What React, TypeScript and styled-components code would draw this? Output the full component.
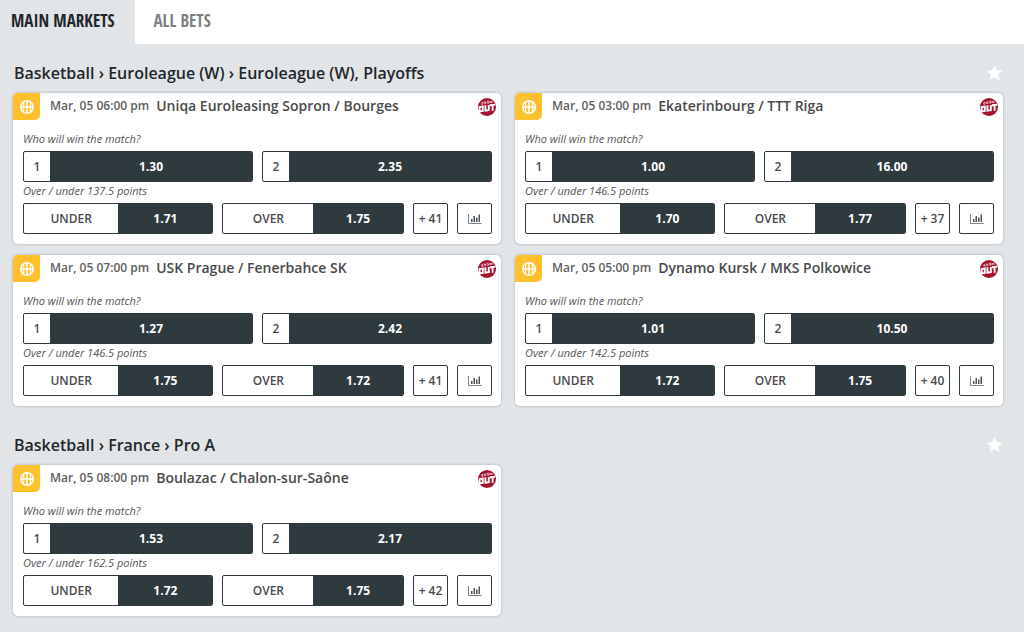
import React from "react";
import styled, { createGlobalStyle } from "styled-components";

const GlobalStyle = createGlobalStyle`
  * { box-sizing: border-box; }
  body {
    margin: 0;
    background: #e1e5e8;
    color: #4a4a4a;
    font-family: "Open Sans", "Noto Sans", sans-serif;
  }
  button { font-family: inherit; cursor: pointer; }
`;

const TabBar = styled.nav`
  display: flex;
  height: 44px;
  background: #fff;
`;

const Tab = styled.button<{ $active?: boolean }>`
  border: 0;
  padding: 0 20px 4px ${(p) => (p.$active ? 11 : 19)}px;
  background: ${(p) => (p.$active ? "#e1e5e8" : "#fff")};
  color: ${(p) => (p.$active ? "#1f272b" : "#7c8183")};
  font-family: "Open Sans Condensed", "Liberation Sans Narrow", sans-serif;
  font-size: 17px;
  font-weight: 700;
  text-transform: uppercase;
`;

const Main = styled.main`
  padding: 17px 21px 0 13px;
`;

const League = styled.section`
  margin-bottom: 27px;
`;

const LeagueHeader = styled.header`
  display: flex;
  align-items: center;
  justify-content: space-between;
  height: 24px;
  margin-bottom: 8px;
`;

const LeagueTitle = styled.h2`
  margin: 0 0 0 1px;
  color: #1f272b;
  font-size: 16px;
  line-height: 24px;
  font-weight: 600;
`;

const StarButton = styled.button`
  display: flex;
  border: 0;
  padding: 0;
  background: none;
`;

const Grid = styled.div`
  display: grid;
  grid-template-columns: 1fr 1fr;
  gap: 11px 14px;
`;

const Card = styled.article`
  overflow: hidden;
  border-radius: 5px;
  background: #fff;
  box-shadow: 0 0 3px rgba(0, 0, 0, 0.25);
`;

const CardHeader = styled.header`
  display: flex;
  align-items: center;
  height: 27px;
  padding-right: 5px;
`;

const Sport = styled.span`
  display: flex;
  align-items: center;
  justify-content: center;
  width: 27px;
  height: 27px;
  margin-right: 10px;
  border-radius: 0 0 5px 0;
  background: #fec12d;
`;

const Time = styled.time`
  margin-right: 7px;
  padding-bottom: 2px;
  color: #606060;
  font-size: 12px;
  line-height: 20px;
  font-weight: 600;
`;

const Teams = styled.h3`
  flex: 1;
  margin: 0;
  padding-bottom: 2px;
  font-size: 14px;
  line-height: 20px;
  font-weight: 600;
`;

const Markets = styled.div`
  padding: 10px 9px 10px 10px;
`;

const Caption = styled.p`
  margin: 0 0 3px;
  color: #555;
  font-size: 11px;
  line-height: 18px;
  font-style: italic;
`;

const Row = styled.div`
  display: flex;
  gap: 9px;
`;

const Bet = styled.button<{ $grow: number }>`
  display: flex;
  flex: ${(p) => p.$grow} 1 0;
  height: 31px;
  border: 1px solid #2f3a3f;
  border-radius: 2px;
  padding: 0;
  overflow: hidden;
  background: #fff;
  color: #4a4a4a;
  font-size: 12px;
  line-height: 29px;
  font-weight: 600;
`;

const Pick = styled.span<{ $wide?: boolean }>`
  flex: ${(p) => (p.$wide ? "1 1 0" : "0 0 26px")};
`;

const Odds = styled.span`
  flex: 1 1 0;
  background: #2f3a3f;
  color: #fff;
  font-weight: 700;
`;

const SmallButton = styled.button`
  display: flex;
  flex: 0 0 35px;
  align-items: center;
  justify-content: center;
  height: 31px;
  border: 1px solid #2f3a3f;
  border-radius: 2px;
  padding: 0;
  background: #fff;
  color: #4a4a4a;
  font-size: 12px;
  font-weight: 600;
`;

const BallIcon = () => (
  <svg width="16" height="16" viewBox="0 0 16 16" fill="none" stroke="#fff" strokeWidth="1.4" aria-hidden="true">
    <circle cx="8" cy="8" r="6.3" />
    <path d="M1.7 8H14.3M8 1.7V14.3M4.6 2.6C4.4 5.6 4.4 10.4 4.6 13.4M11.4 2.6C11.6 5.6 11.6 10.4 11.4 13.4" />
  </svg>
);

const CashOutIcon = () => (
  <svg width="18" height="18" viewBox="0 0 18 18" role="img" aria-label="Cash out">
    <circle cx="9" cy="9" r="9" fill="#a5102b" />
    <g fill="none" stroke="#fff">
      <path
        strokeWidth="0.9"
        opacity="0.8"
        d="M5.4 4.2L3.9 4.6V6.3L5.5 5.9M6.5 5.8L7.1 3.6L8.2 5.4M6.7 5H7.8M10.7 3L9.4 3.3V4.1L10.8 4.2V5L9.4 5.3M12 2.9V4.9M14 2.9V4.9M12 3.9H14"
      />
      <path strokeWidth="1.9" d="M1.6 9L4.8 8.6V13L1.6 13.4ZM7.4 7.3V12.6L10.8 12.2V6.9M11.9 7.3L17.4 6.6M14.6 7V12.8" />
    </g>
  </svg>
);

const ChartIcon = () => (
  <svg width="14" height="12" viewBox="0 0 14 12" aria-hidden="true">
    <path d="M0.5 1V10.5H13.5" fill="none" stroke="#7d878b" />
    <path d="M3 6H4.5V9H3ZM5.5 3H7V9H5.5ZM8 4.5H9.5V9H8ZM10.5 1.5H12V9H10.5Z" fill="#4f555a" />
  </svg>
);

const StarIcon = () => (
  <svg width="17" height="16" viewBox="0 0 17 16" aria-hidden="true">
    <path d="M8.5 0L10.7 5.3L16.5 5.8L12.1 9.5L13.5 15.2L8.5 12.1L3.5 15.2L4.9 9.5L0.5 5.8L6.3 5.3Z" fill="#fff" />
  </svg>
);

type Match = {
  time: string;
  teams: string;
  win: [string, string];
  points: string;
  total: [string, string];
  more: number;
};

const leagues: { title: string; matches: Match[] }[] = [
  {
    title: "Basketball › Euroleague (W) › Euroleague (W), Playoffs",
    matches: [
      { time: "06:00", teams: "Uniqa Euroleasing Sopron / Bourges", win: ["1.30", "2.35"], points: "137.5", total: ["1.71", "1.75"], more: 41 },
      { time: "03:00", teams: "Ekaterinbourg / TTT Riga", win: ["1.00", "16.00"], points: "146.5", total: ["1.70", "1.77"], more: 37 },
      { time: "07:00", teams: "USK Prague / Fenerbahce SK", win: ["1.27", "2.42"], points: "146.5", total: ["1.75", "1.72"], more: 41 },
      { time: "05:00", teams: "Dynamo Kursk / MKS Polkowice", win: ["1.01", "10.50"], points: "142.5", total: ["1.72", "1.75"], more: 40 },
    ],
  },
  {
    title: "Basketball › France › Pro A",
    matches: [
      { time: "08:00", teams: "Boulazac / Chalon-sur-Saône", win: ["1.53", "2.17"], points: "162.5", total: ["1.72", "1.75"], more: 42 },
    ],
  },
];

const MatchCard = ({ match }: { match: Match }) => (
  <Card>
    <CardHeader>
      <Sport><BallIcon /></Sport>
      <Time>{`Mar, 05 ${match.time} pm`}</Time>
      <Teams>{match.teams}</Teams>
      <CashOutIcon />
    </CardHeader>
    <Markets>
      <Caption>Who will win the match?</Caption>
      <Row>
        {match.win.map((odds, i) => (
          <Bet key={i} $grow={1}>
            <Pick>{i + 1}</Pick>
            <Odds>{odds}</Odds>
          </Bet>
        ))}
      </Row>
      <Caption>{`Over / under ${match.points} points`}</Caption>
      <Row>
        <Bet $grow={190}>
          <Pick $wide>UNDER</Pick>
          <Odds>{match.total[0]}</Odds>
        </Bet>
        <Bet $grow={181}>
          <Pick $wide>OVER</Pick>
          <Odds>{match.total[1]}</Odds>
        </Bet>
        <SmallButton>{`+ ${match.more}`}</SmallButton>
        <SmallButton aria-label="Statistics"><ChartIcon /></SmallButton>
      </Row>
    </Markets>
  </Card>
);

export default function App() {
  return (
    <>
      <GlobalStyle />
      <TabBar>
        <Tab $active>Main markets</Tab>
        <Tab>All bets</Tab>
      </TabBar>
      <Main>
        {leagues.map((league) => (
          <League key={league.title}>
            <LeagueHeader>
              <LeagueTitle>{league.title}</LeagueTitle>
              <StarButton aria-label="Add to favourites"><StarIcon /></StarButton>
            </LeagueHeader>
            <Grid>
              {league.matches.map((match) => (
                <MatchCard key={match.teams} match={match} />
              ))}
            </Grid>
          </League>
        ))}
      </Main>
    </>
  );
}
